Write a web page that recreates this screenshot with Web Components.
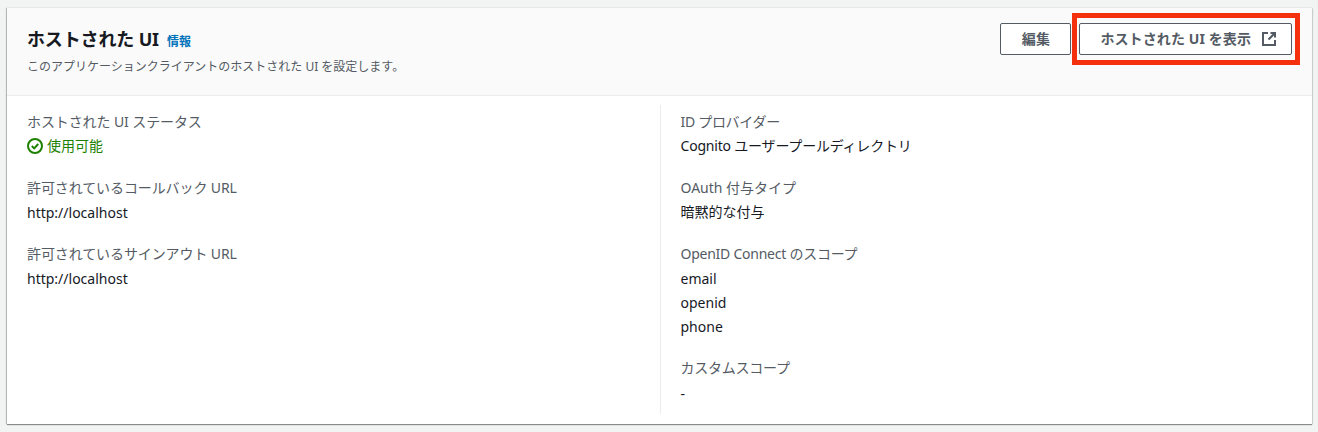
<!DOCTYPE html>
<html lang="ja">
<head>
<meta charset="utf-8">
<style>
  html, body { margin: 0; background: #f2f3f3; }
  body { padding: 8px 6px 8px 7px; font-family: "Noto Sans", "Noto Sans CJK JP", sans-serif; }
</style>
</head>
<body>
<template id="kv-tpl">
  <style>
    :host { display: block; font-size: 14px; line-height: 24px; color: #16191f; }
    .label { color: #545b64; letter-spacing: var(--label-ls, -0.1px); }
    .value { padding-top: var(--value-shift, 0px); margin-bottom: calc(-1 * var(--value-shift, 0px)); }
  </style>
  <div class="label"><slot name="label"></slot></div>
  <div class="value"><slot></slot></div>
</template>

<template id="btn-tpl">
  <style>
    :host { display: inline-flex; }
    button {
      display: flex; align-items: center; justify-content: center; gap: 10px;
      box-sizing: border-box; height: 32px; padding: 0 14px 0 20px;
      background: #fff; border: 1px solid #545b64; border-radius: 2px;
      color: #545b64; font: 700 14px/20px "Noto Sans", "Noto Sans CJK JP", sans-serif;
      letter-spacing: 0.1px; white-space: nowrap;
    }
    :host([plain]) button { width: 71px; padding: 0; }
    svg { display: block; }
  </style>
  <button><slot></slot><slot name="icon"></slot></button>
</template>

<template id="panel-tpl">
  <style>
    :host { display: block; position: relative; box-sizing: border-box; height: 416px; background: #fff;
      box-shadow: 0 1px 1px 0 rgba(0,0,0,.4), 1px 0 1px 0 rgba(0,0,0,.1), -1px 0 1px 0 rgba(0,0,0,.2); }
    header { box-sizing: border-box; height: 88px; display: flex; justify-content: space-between; align-items: flex-start;
      padding: 15px 20px 0 20px; background: #fafafa; border-bottom: 1px solid #eaeded; }
    .title { display: flex; align-items: baseline; gap: 8px; margin: 1px 0 0; font-size: 18px; line-height: 30px; font-weight: 700; color: #16191f; letter-spacing: -0.15px; }
    .info { font-size: 12px; font-weight: 700; color: #0073bb; letter-spacing: 0; }
    .desc { font-size: 12px; line-height: 20px; color: #545b64; }
    .actions { display: flex; gap: 8px; }
    .cols { display: grid; grid-template-columns: 1fr 1fr; padding: 9px 20px 0 20px; }
    .col { display: flex; flex-direction: column; gap: 18px; padding: 5px 0 10px; }
    .col + .col { border-left: 1px solid #eaeded; padding-left: 20px; }
    .mark { position: absolute; left: 1065px; top: 5px; width: 218px; height: 42px; border: 5px solid #f5300d; pointer-events: none; }
  </style>
  <header>
    <div>
      <h2 class="title"><slot name="title"></slot><span class="info"><slot name="info"></slot></span></h2>
      <div class="desc"><slot name="desc"></slot></div>
    </div>
    <div class="actions"><slot name="actions"></slot></div>
  </header>
  <div class="cols">
    <div class="col"><slot name="left"></slot></div>
    <div class="col"><slot name="right"></slot></div>
  </div>
  <div class="mark"></div>
</template>

<template id="status-tpl">
  <style>
    :host { display: flex; align-items: center; gap: 4px; color: #1d8102; }
    svg { display: block; }
  </style>
  <svg width="16" height="16" viewBox="0 0 16 16" fill="none" stroke="#1d8102" stroke-width="2">
    <circle cx="8" cy="8" r="7"/>
    <path d="M4.8 8 7.2 10.4 11.2 6"/>
  </svg>
  <span><slot></slot></span>
</template>

<hosted-panel>
  <span slot="title">ホストされた UI</span>
  <span slot="info">情報</span>
  <span slot="desc">このアプリケーションクライアントのホストされた UI を設定します。</span>

  <aws-btn slot="actions" plain>編集</aws-btn>
  <aws-btn slot="actions">ホストされた UI を表示
    <svg slot="icon" width="16" height="16" viewBox="0 0 16 16" fill="none" stroke="#545b64" stroke-width="2">
      <path d="M7 2H2v12h12V9"/>
      <path d="M9.5 2H14v4.5"/>
      <path d="M14 2 7.5 8.5"/>
    </svg>
  </aws-btn>

  <key-value slot="left"><span slot="label">ホストされた UI ステータス</span><status-ok>使用可能</status-ok></key-value>
  <key-value slot="left" style="--value-shift:1px"><span slot="label">許可されているコールバック URL</span>http://localhost</key-value>
  <key-value slot="left" style="--value-shift:1px"><span slot="label">許可されているサインアウト URL</span>http://localhost</key-value>

  <key-value slot="right" style="--label-ls:-0.3px"><span slot="label">ID プロバイダー</span><span style="letter-spacing:-0.2px">Cognito ユーザープールディレクトリ</span></key-value>
  <key-value slot="right" style="--label-ls:0"><span slot="label">OAuth 付与タイプ</span>暗黙的な付与</key-value>
  <key-value slot="right" style="--label-ls:-0.25px;--value-shift:1px"><span slot="label">OpenID Connect のスコープ</span>email<br>openid<br>phone</key-value>
  <key-value slot="right" style="--label-ls:-0.25px;--value-shift:2px"><span slot="label">カスタムスコープ</span>-</key-value>
</hosted-panel>

<script>
  class TplElement extends HTMLElement {
    constructor() {
      super();
      this.attachShadow({ mode: 'open' });
      const tpl = document.getElementById(this.constructor.tpl);
      this.shadowRoot.appendChild(tpl.content.cloneNode(true));
    }
  }
  class KeyValue extends TplElement { static tpl = 'kv-tpl'; }
  class AwsBtn extends TplElement { static tpl = 'btn-tpl'; }
  class HostedPanel extends TplElement { static tpl = 'panel-tpl'; }
  class StatusOk extends TplElement { static tpl = 'status-tpl'; }

  customElements.define('key-value', KeyValue);
  customElements.define('aws-btn', AwsBtn);
  customElements.define('hosted-panel', HostedPanel);
  customElements.define('status-ok', StatusOk);
</script>
</body>
</html>
